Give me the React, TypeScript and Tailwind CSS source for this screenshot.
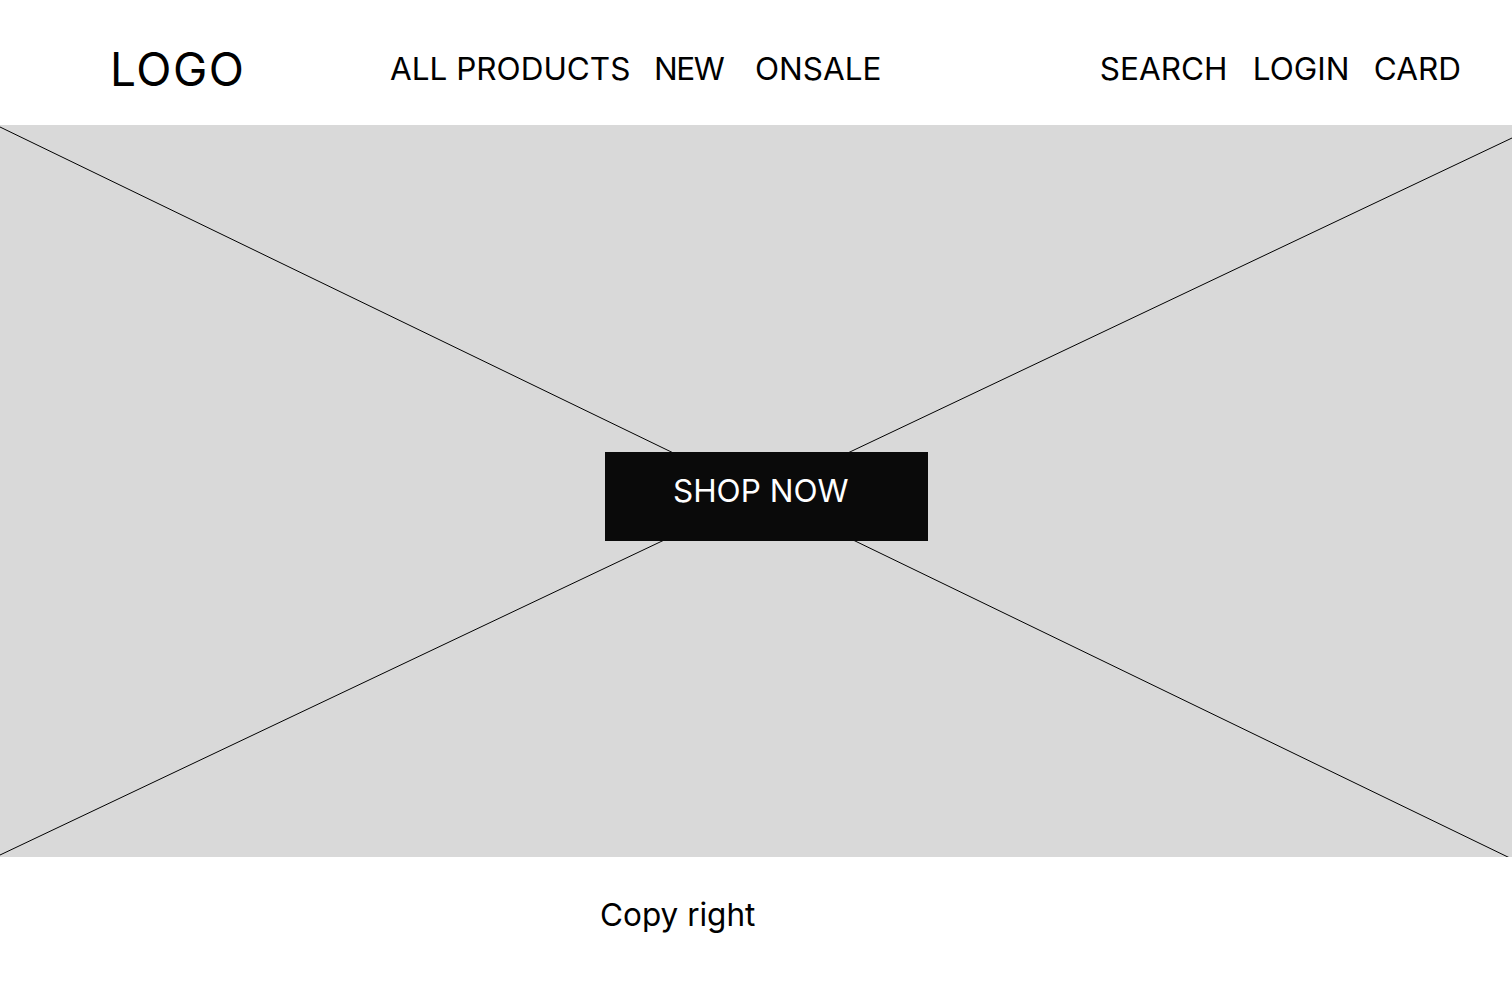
export default function App() {
  return (
    <div className="w-[1512px] h-[982px] bg-white text-black flex flex-col font-['Inter',sans-serif]">
      <header className="h-[125px] shrink-0 flex items-center pl-[110px] pr-[51px] pt-[12px]">
        <div className="w-[280px] text-[46px] leading-none tracking-[1.5px]">LOGO</div>
        <nav className="flex items-center text-[31.5px] leading-none">
          <a className="w-[264px]">ALL PRODUCTS</a>
          <a className="w-[101px] tracking-[-1.5px]">NEW</a>
          <a>ONSALE</a>
        </nav>
        <div className="ml-auto flex items-center text-[31.5px] leading-none">
          <a className="w-[153px]">SEARCH</a>
          <a className="w-[121px]">LOGIN</a>
          <a>CARD</a>
        </div>
      </header>

      <section className="relative h-[732px] shrink-0 bg-[#d9d9d9] flex items-center justify-center pl-[21px] pt-[11px]">
        <svg
          className="absolute inset-0 w-full h-full"
          viewBox="0 0 1512 732"
          preserveAspectRatio="none"
        >
          <line x1="0" y1="2" x2="1512" y2="734" stroke="#000" strokeWidth="1" />
          <line x1="1512" y1="13" x2="0" y2="730" stroke="#000" strokeWidth="1" />
        </svg>
        <button className="relative w-[323px] h-[89px] bg-[#0a0a0a] text-white text-[31.5px] leading-none text-left pl-[68px] pb-[12px]">
          SHOP NOW
        </button>
      </section>

      <footer className="flex-1 flex items-center pl-[600px] pb-[10px]">
        <p className="text-[31.5px] leading-none">Copy right</p>
      </footer>
    </div>
  );
}
